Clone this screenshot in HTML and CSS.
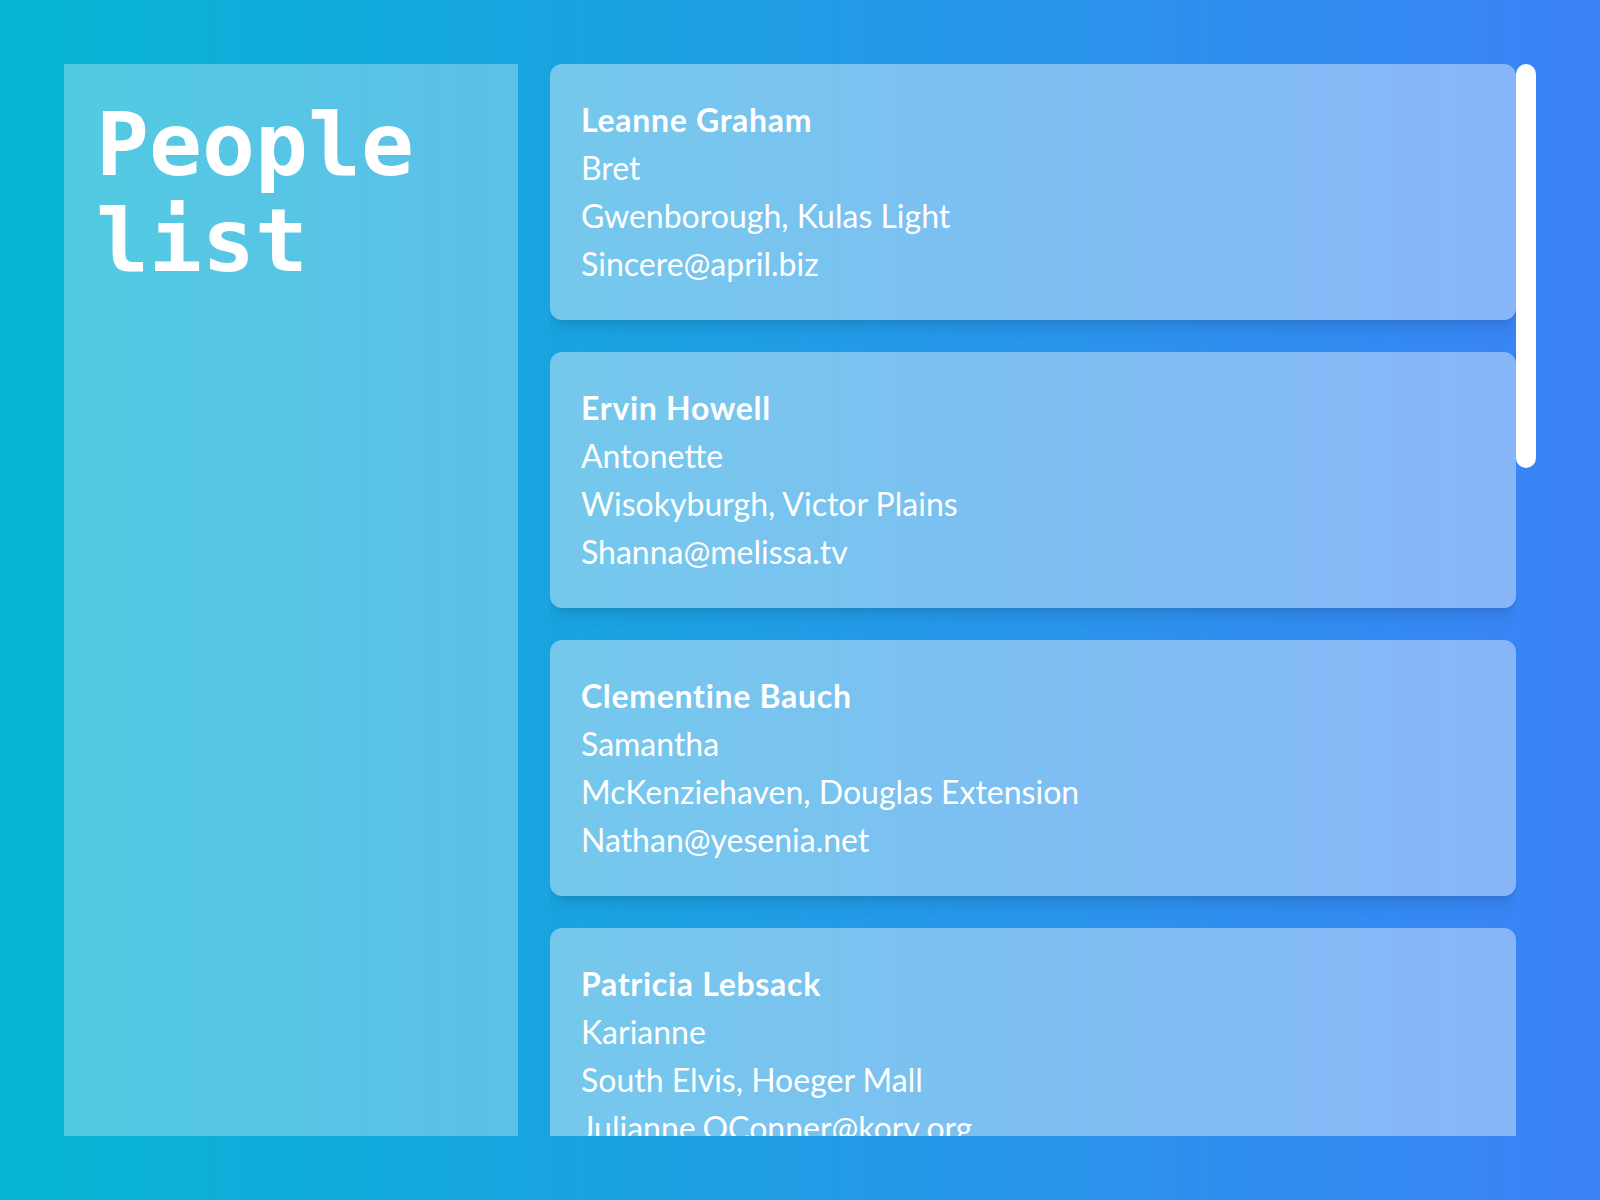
FILE: index.html
```html
<!DOCTYPE html>
<html lang="en">
<head>
<meta charset="utf-8">
<title>People list</title>
<link rel="stylesheet" href="styles.css">
</head>
<body>
<main class="page">
  <aside class="side">
    <h1 class="title">People list</h1>
  </aside>
  <div class="scroller">
    <section class="list">
      <article class="card"><p class="name">Leanne Graham</p><p>Bret</p><p>Gwenborough, Kulas Light</p><p>Sincere@april.biz</p></article>
      <article class="card"><p class="name">Ervin Howell</p><p>Antonette</p><p>Wisokyburgh, Victor Plains</p><p>Shanna@melissa.tv</p></article>
      <article class="card"><p class="name">Clementine Bauch</p><p>Samantha</p><p>McKenziehaven, Douglas Extension</p><p>Nathan@yesenia.net</p></article>
      <article class="card"><p class="name">Patricia Lebsack</p><p>Karianne</p><p>South Elvis, Hoeger Mall</p><p>Julianne.OConner@kory.org</p></article>
      <article class="card"><p class="name">Chelsey Dietrich</p><p>Kamren</p><p>Roscoeview, Skiles Walks</p><p>Lucio_Hettinger@annie.ca</p></article>
      <article class="card"><p class="name">Mrs. Dennis Schulist</p><p>Leopoldo_Corkery</p><p>South Christy, Norberto Crossing</p><p>Karley_Dach@jasper.info</p></article>
      <article class="card"><p class="name">Kurtis Weissnat</p><p>Elwyn.Skiles</p><p>Howemouth, Rex Trail</p><p>Telly.Hoeger@billy.biz</p></article>
      <article class="card"><p class="name">Nicholas Runolfsdottir V</p><p>Maxime_Nienow</p><p>Aliyaview, Ellsworth Summit</p><p>Sherwood@rosamond.me</p></article>
      <article class="card"><p class="name">Glenna Reichert</p><p>Delphine</p><p>Bartholomebury, Dayna Park</p><p>Chaim_McDermott@dana.io</p></article>
      <article class="card"><p class="name">Clementina DuBuque</p><p>Moriah.Stanton</p><p>Lebsackbury, Kattie Turnpike</p><p>Rey.Padberg@karina.biz</p></article>
    </section>
    <div class="thumb"></div>
  </div>
</main>
</body>
</html>
```

FILE: styles.css
```css
* { box-sizing: border-box; }
html, body { margin: 0; height: 100%; }
body {
  background: linear-gradient(to right, #06b6d4, #3b82f6);
  font-family: "Lato", "Open Sans", sans-serif;
  color: #fff;
  overflow: hidden;
}
.page {
  display: flex;
  gap: 32px;
  height: 1200px;
  padding: 64px;
}
.side {
  width: 454px;
  flex: none;
  background: rgba(255, 255, 255, 0.3);
  padding: 33px 32px 32px 32px;
}
.title {
  margin: 0;
  font-family: "DejaVu Sans Mono", monospace;
  font-weight: bold;
  font-size: 88px;
  line-height: 96px;
  color: #fff;
}
.scroller {
  position: relative;
  flex: 1;
  min-width: 0;
  padding-right: 20px;
}
.list {
  height: 100%;
  display: flex;
  flex-direction: column;
  gap: 32px;
  overflow: hidden;
}
.thumb {
  position: absolute;
  top: 0;
  right: 0;
  width: 20px;
  height: 404px;
  border-radius: 10px;
  background: #fff;
}
.card {
  flex: none;
  height: 256px;
  padding: 32px 32px 32px 31px;
  border-radius: 12px;
  background: rgba(255, 255, 255, 0.4);
  box-shadow: 0 10px 15px -3px rgba(0, 0, 0, 0.1), 0 4px 6px -4px rgba(0, 0, 0, 0.1);
}
.card p {
  margin: 0;
  font-size: 32px;
  line-height: 48px;
}
.card .name {
  font-weight: bold;
  letter-spacing: 0.7px;
}
```
